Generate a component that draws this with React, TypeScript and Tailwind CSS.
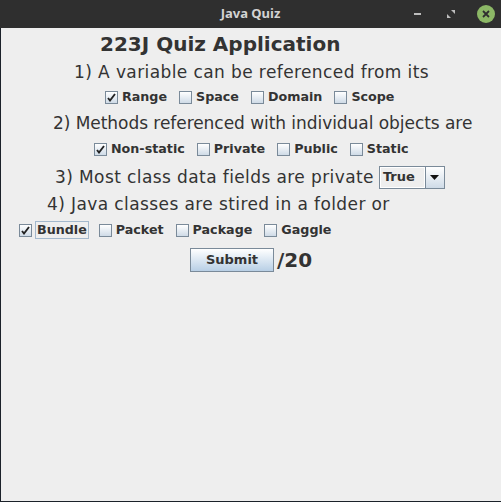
import { ReactNode } from "react";

type BoxProps = { label: string; checked?: boolean; focused?: boolean };

const CheckBox = ({ label, checked, focused }: BoxProps) => (
  <div className="flex items-center">
    <div className="w-[13px] h-[13px] border border-[#7a8a99] bg-gradient-to-b from-[#ffffff] to-[#cfdbe7] flex items-center justify-center">
      {checked && (
        <svg width="9" height="9" viewBox="0 0 9 9">
          <path d="M1 5 L3 7.5 L8 1" fill="none" stroke="#222222" strokeWidth="1.9" />
        </svg>
      )}
    </div>
    <span
      className={
        "ml-[4px] text-[12.7px] font-bold text-[#333333] leading-[16px] " +
        (focused ? "outline outline-1 outline-[#a3b8cc] px-[1px] -mx-[1px]" : "")
      }
    >
      {label}
    </span>
  </div>
);

const Row = ({ pl, h, children }: { pl: string; h: string; children: ReactNode }) => (
  <div className={`flex items-center ${pl} ${h}`}>{children}</div>
);

const Question = ({ tight, children }: { tight?: boolean; children: ReactNode }) => (
  <span className={"text-[17px] leading-none " + (tight ? "tracking-[-0.05px]" : "tracking-[0.4px]")}>{children}</span>
);

export default function App() {
  return (
    <div className="w-[501px] h-[502px] bg-[#1b2129] flex flex-col" style={{ fontFamily: '"DejaVu Sans", sans-serif' }}>
      {/* title bar */}
      <div className="h-[28px] bg-[#2f2f2f] relative flex items-center justify-center">
        <span className="text-[13px] font-bold text-[#d3d3d3]" style={{ fontFamily: '"Noto Sans", sans-serif' }}>
          Java Quiz
        </span>
        <div className="absolute right-[6px] top-0 h-[28px] flex items-center">
          <div className="w-[7px] h-[2px] bg-[#bdbdbd] mr-[26px]" />
          <svg width="8" height="8" viewBox="0 0 8 8" className="mr-[22px]">
            <path d="M0 8 L0 4 L4 8 Z M8 0 L8 4 L4 0 Z" fill="#bdbdbd" />
          </svg>
          <div className="w-[18px] h-[18px] rounded-full bg-[#8cb866] flex items-center justify-center">
            <svg width="8" height="8" viewBox="0 0 8 8">
              <path d="M1 1 L7 7 M7 1 L1 7" stroke="#2f2f2f" strokeWidth="1.8" />
            </svg>
          </div>
        </div>
      </div>

      {/* content */}
      <div className="flex-1 ml-[1px] mb-[1px] bg-[#eeeeee] text-[#333333] flex flex-col">
        <Row pl="pl-[99px]" h="h-[32px]">
          <span className="text-[20px] font-bold leading-none">223J Quiz Application</span>
        </Row>
        <Row pl="pl-[73px]" h="h-[24px]">
          <Question>1) A variable can be referenced from its</Question>
        </Row>
        <Row pl="pl-[104px]" h="h-[26px]">
          <div className="flex gap-[12px]">
            <CheckBox label="Range" checked />
            <CheckBox label="Space" />
            <CheckBox label="Domain" />
            <CheckBox label="Scope" />
          </div>
        </Row>
        <Row pl="pl-[52px]" h="h-[26px]">
          <Question tight>2) Methods referenced with individual objects are</Question>
        </Row>
        <Row pl="pl-[93px]" h="h-[26px]">
          <div className="flex gap-[12px]">
            <CheckBox label="Non-static" checked />
            <CheckBox label="Private" />
            <CheckBox label="Public" />
            <CheckBox label="Static" />
          </div>
        </Row>
        <Row pl="pl-[54px]" h="h-[30px]">
          <Question>3) Most class data fields are private</Question>
          <div className="ml-[5px] flex h-[23px] border border-[#7a8a99]">
            <div className="w-[45px] bg-[#eeeeee] border border-[#ffffff] flex items-center pl-[2px] text-[13px] font-bold">
              True
            </div>
            <div className="w-[19px] border-l border-[#7a8a99] bg-gradient-to-b from-[#ffffff] to-[#cfdbe7] flex items-center justify-center">
              <svg width="9" height="5" viewBox="0 0 9 5">
                <path d="M0 0 L9 0 L4.5 5 Z" fill="#111111" />
              </svg>
            </div>
          </div>
        </Row>
        <Row pl="pl-[46px]" h="h-[25px]">
          <Question>4) Java classes are stired in a folder or</Question>
        </Row>
        <Row pl="pl-[18px]" h="h-[26px]">
          <div className="flex gap-[12px]">
            <CheckBox label="Bundle" checked focused />
            <CheckBox label="Packet" />
            <CheckBox label="Package" />
            <CheckBox label="Gaggle" />
          </div>
        </Row>
        <Row pl="pl-[189px]" h="h-[33px]">
          <div className="w-[84px] h-[24px] border border-[#7a8a99] bg-gradient-to-b from-[#ffffff] to-[#b8cfe5] flex items-center justify-center text-[13px] font-bold">
            Submit
          </div>
          <span className="ml-[3px] text-[20px] font-bold leading-none">/20</span>
        </Row>
      </div>
    </div>
  );
}
